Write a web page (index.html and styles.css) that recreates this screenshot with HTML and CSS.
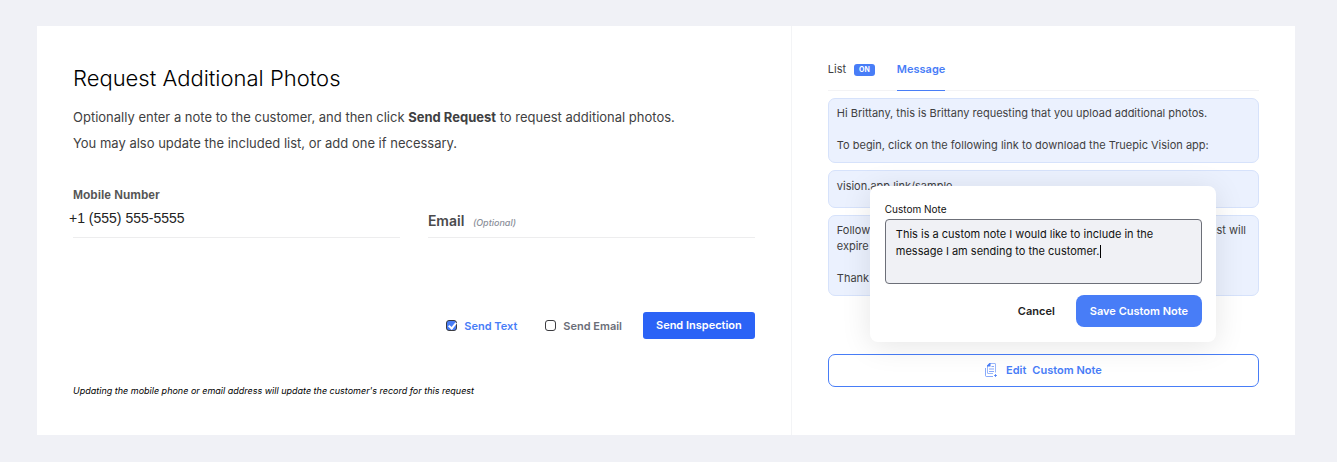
FILE: index.html
```html
<!DOCTYPE html>
<html lang="en">
<head>
  <meta charset="UTF-8" />
  <meta name="viewport" content="width=device-width, initial-scale=1.0"/>
  <title>Request Additional Photos</title>
  <link rel="stylesheet" href="styles.css">
</head>
<body>
  <div class="panel">
    <main class="request">
      <h1>Request Additional Photos</h1>
      <p class="intro">Optionally enter a note to the customer, and then click <b>Send Request</b> to request additional photos.<br>You may also update the included list, or add one if necessary.</p>
      <form id="requestForm">
        <div class="fields">
          <div class="field">
            <label for="mobile">Mobile Number</label>
            <input type="tel" id="mobile" value="+1 (555) 555-5555">
          </div>
          <div class="field field-empty">
            <label for="email">Email <i>(Optional)</i></label>
            <input type="email" id="email">
          </div>
        </div>
        <div class="send-row">
          <label class="check"><input type="checkbox" checked> <span>Send Text</span></label>
          <label class="check"><input type="checkbox"> <span>Send Email</span></label>
          <button type="button" class="btn-send">Send Inspection</button>
        </div>
      </form>
      <p class="hint">Updating the mobile phone or email address will update the customer's record for this request</p>
    </main>

    <aside class="side">
      <nav class="tabs">
        <a href="#list">List <span class="badge">ON</span></a>
        <a href="#message" class="active">Message</a>
      </nav>
      <div class="messages">
        <div class="bubble">
          <p>Hi Brittany, this is Brittany requesting that you upload additional photos.</p>
          <p>To begin, click on the following link to download the Truepic Vision app:</p>
        </div>
        <div class="bubble bubble-link">
          <p>vision.app.link/sample</p>
        </div>
        <div class="bubble">
          <p>Follow the steps in the app to take and send your new photos. This request will expire in 7 days.</p>
          <p>Thank you!</p>
        </div>

        <div class="note-popup" role="dialog" aria-labelledby="noteLabel">
          <label for="note" id="noteLabel">Custom Note</label>
          <div class="note-box">
            <textarea id="note" spellcheck="false">This is a custom note I would like to include in the message I am sending to the customer.</textarea>
            <span class="caret"></span>
          </div>
          <div class="note-actions">
            <button type="button" class="btn-cancel">Cancel</button>
            <button type="button" class="btn-save">Save Custom Note</button>
          </div>
        </div>
      </div>
      <button type="button" class="btn-edit">
        <svg width="13" height="16" viewBox="0 0 13 16" fill="none" stroke="currentColor" aria-hidden="true">
          <path d="M2.500 4 5 1.500H10Q10.500 1.500 10.500 2V10.500M2.500 4V11Q2.500 11.500 3 11.500H8" stroke-opacity=".55"/>
          <path d="M2 4.500V3.500L4.500 1H5.500V4.500z" fill="currentColor" stroke="none"/>
          <path d="M.5 6V13.500Q.5 14.500 1.500 14.500H8" stroke-opacity=".65"/>
          <path d="M6.500 4.500H9M4 7H9M4 9.500H9" stroke-opacity=".65"/>
          <path d="M10.500 12V15M9 13.500H12" stroke-opacity=".8"/>
        </svg>
        <span>Edit</span> <span>Custom Note</span>
      </button>
    </aside>
  </div>
</body>
</html>
```

FILE: styles.css
```css
* { box-sizing: border-box; }
body { font-family: Inter, sans-serif; background: #f0f1f6; margin: 0; padding: 26px 42px 28px 37px; color: #3f3f42; }
h1, p { margin: 0; }
button, input, textarea { font-family: inherit; }
button { cursor: pointer; }

.panel { display: grid; grid-template-columns: 3fr 2fr; background: #fff; }

/* left side */
.request { padding: 36px; border-right: 1px solid #f3f4f6; }
h1 { font-size: 22px; font-weight: 300; line-height: 32px; color: #000; }
.intro { font-size: 13px; line-height: 26px; margin-top: 10px; }
.fields { display: grid; grid-template-columns: 1fr 1fr; gap: 28px; margin-top: 31px; }
.field { display: flex; flex-direction: column; border-bottom: 1px solid #ededee; height: 51px; }
.field label { font-family: "Liberation Sans", Arial, sans-serif; font-size: 12px; line-height: 16px; font-weight: 700; color: #555; }
.field input { border: 0; padding: 0; background: none; outline: none; font-family: "Liberation Sans", Arial, sans-serif; font-size: 14px; line-height: 20px; height: 20px; color: #222; margin: 5px 0 0 -4px; }
.field-empty { position: relative; justify-content: flex-end; }
.field-empty label { font-family: Inter, sans-serif; font-size: 14px; line-height: 28px; font-weight: 600; color: #4a4a4c; }
.field-empty label i { font-size: 9px; font-weight: 500; color: #8b8f9a; margin-left: 5px; }
.field-empty input { position: absolute; inset: 0; height: auto; margin: 0; }

.send-row { display: flex; justify-content: flex-end; align-items: center; margin-top: 74px; }
.check { display: flex; align-items: center; gap: 7px; font-size: 11px; font-weight: 600; color: #6b6e78; margin-right: 28px; }
.check + .btn-send { margin-left: -7px; }
.check input { appearance: none; width: 11px; height: 11px; margin: 0; border: 1px solid #3c3c40; border-radius: 3px; background: #fff; }
.check input:checked { background: #487df7; position: relative; }
.check input:checked::after { content: ""; position: absolute; left: 3px; top: 0; width: 3px; height: 6px; border: solid #fff; border-width: 0 2px 2px 0; transform: rotate(40deg); }
.check input:checked + span { color: #487df7; }
.btn-send { height: 27px; padding: 0 13px 1px; border: 0; border-radius: 3px; background: #2b63f6; color: #fff; font-size: 11px; font-weight: 600; }
.hint { font-size: 9px; line-height: 16px; font-style: italic; color: #000; margin-top: 44px; }

/* right side */
.side { padding: 36px; }
.tabs { display: flex; gap: 22px; height: 29px; border-bottom: 1px solid #f3f3f5; }
.tabs a { display: flex; height: 29px; font-size: 11px; line-height: 15px; color: #3f3f42; text-decoration: none; }
.tabs .active { color: #487df7; font-weight: 600; border-bottom: 1px solid #487df7; }
.badge { height: 12px; margin: 2px 0 0 8px; padding: 0 5px; border-radius: 3px; background: #487df7; color: #fff; font-size: 7px; line-height: 12px; font-weight: 700; }
.messages { position: relative; margin-top: 7px; }
.bubble { border: 1px solid #d6e2fb; border-radius: 7px; background: #ebf1fe; padding: 6px 8px 9px; font-size: 11px; line-height: 16px; }
.bubble + .bubble { margin-top: 7px; }
.bubble p + p { margin-top: 16px; }
.bubble-link { padding-top: 7px; padding-bottom: 13px; }

.note-popup { position: absolute; top: 88px; left: 42px; right: 43px; padding: 15px 14px 15px 15px; border-radius: 8px; background: #fff; box-shadow: 0 4px 30px rgba(0, 0, 0, .1); }
.note-popup label { display: block; font-size: 10px; line-height: 16px; color: #111; margin-bottom: 2px; }
.note-box { position: relative; }
.note-box textarea { display: block; width: 100%; height: 65px; padding: 6px 10px; border: 1px solid #6c6f78; border-radius: 4px; background: #f0f1f5; color: #111; font-size: 11px; line-height: 17px; resize: none; outline: none; }
.caret { position: absolute; left: 215px; top: 26px; width: 1px; height: 13px; background: #000; }
.note-actions { display: flex; justify-content: flex-end; gap: 21px; margin-top: 11px; }
.note-actions button { height: 32px; border: 0; font-size: 11px; font-weight: 600; }
.note-actions .btn-cancel { background: none; padding: 0 0 1px; color: #222; }
.note-actions .btn-save { padding: 0 14px 1px; border-radius: 8px; background: #487df7; color: #fff; }

.btn-edit { display: flex; justify-content: center; align-items: center; width: 100%; height: 33px; margin-top: 58px; padding: 0 6px 1px; border: 1px solid #487df7; border-radius: 7px; background: #fff; color: #487df7; font-size: 11px; font-weight: 600; gap: 6px; }
.btn-edit svg { margin-right: 2px; }
```
